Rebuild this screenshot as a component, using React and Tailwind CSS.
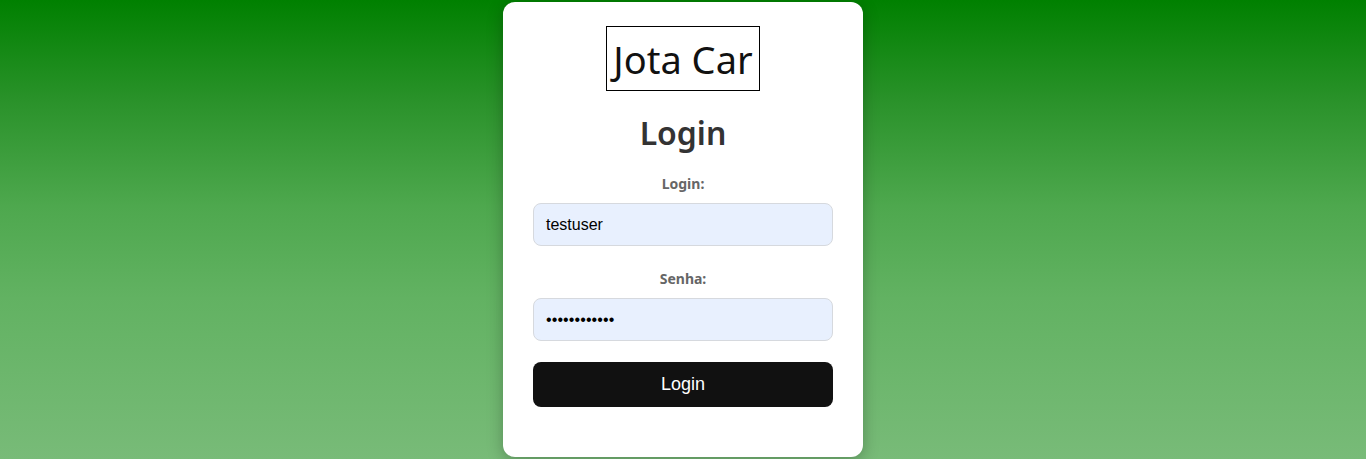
export default function App() {
  return (
    <div
      className="w-full h-[459px] flex justify-center overflow-hidden"
      style={{
        background:
          "linear-gradient(to bottom, #008000 0%, #2a922a 22%, #4ea84e 45%, #62b262 65%, #78bb78 100%)",
      }}
    >
      <div className="mt-[2px] w-[360px] h-[455px] bg-white rounded-[12px] shadow-[0_4px_16px_rgba(0,0,0,0.25)] px-[30px] pt-[24px] flex flex-col items-center">
        <div className="h-[65px] w-[154px] border border-black flex items-center justify-center text-[38px] text-[#111] font-['Noto_Sans',sans-serif] leading-none">
          Jota Car
        </div>
        <h1 className="mt-[22px] text-[32px] leading-[40px] font-semibold text-[#333] font-['Noto_Sans',sans-serif]">
          Login
        </h1>
        <label className="mt-[22px] text-[14px] leading-[18px] font-bold text-[#666] font-['Noto_Sans',sans-serif]">
          Login:
        </label>
        <div className="mt-[10px] w-full h-[43px] rounded-[8px] border border-[#d6d9de] bg-[#e8f0fe] flex items-center px-[12px] text-[16px] text-black font-['Liberation_Sans',Arial,sans-serif]">
          testuser
        </div>
        <label className="mt-[24px] text-[14px] leading-[18px] font-bold text-[#666] font-['Noto_Sans',sans-serif]">
          Senha:
        </label>
        <div className="mt-[10px] w-full h-[43px] rounded-[8px] border border-[#d6d9de] bg-[#e8f0fe] flex items-center px-[12px] text-[16px] text-black font-['Liberation_Sans',Arial,sans-serif] tracking-[0.1px]">
          ••••••••••••
        </div>
        <button className="mt-[21px] w-full h-[45px] rounded-[8px] bg-[#111] text-white text-[18px] font-['Liberation_Sans',Arial,sans-serif]">
          Login
        </button>
      </div>
    </div>
  );
}
